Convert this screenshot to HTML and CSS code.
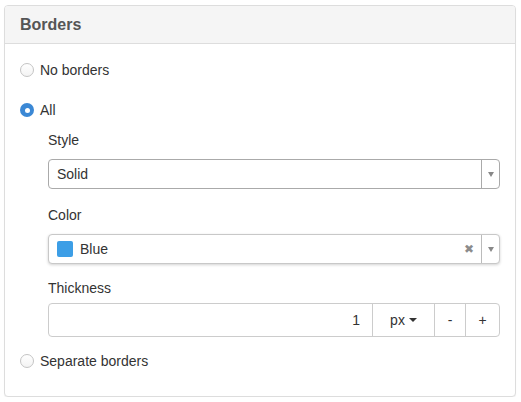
FILE: index.html
```html
<!DOCTYPE html>
<html>
<head>
<meta charset="utf-8">
<link rel="stylesheet" href="styles.css">
</head>
<body>
<div class="panel">
  <div class="panel-heading">Borders</div>
  <div class="panel-body">
    <label class="radio"><span class="radio-dot"></span>No borders</label>
    <label class="radio radio-all"><span class="radio-dot checked"></span>All</label>
    <div class="group">
      <div class="field-label">Style</div>
      <div class="select">
        <span class="select-value">Solid</span>
        <span class="select-arrow"><span class="caret-grey"></span></span>
      </div>
      <div class="field-label">Color</div>
      <div class="select select-focus">
        <span class="select-value"><span class="swatch"></span>Blue</span>
        <span class="select-clear">&#x2716;</span>
        <span class="select-arrow"><span class="caret-grey"></span></span>
      </div>
      <div class="field-label field-label-tight">Thickness</div>
      <div class="input-group">
        <div class="ig-input">1</div>
        <div class="ig-btn ig-unit">px<span class="caret"></span></div>
        <div class="ig-btn ig-small">-</div>
        <div class="ig-btn ig-small ig-last">+</div>
      </div>
    </div>
    <label class="radio radio-sep"><span class="radio-dot"></span>Separate borders</label>
  </div>
</div>
</body>
</html>
```
FILE: styles.css
```css
html, body {
  margin: 0;
  padding: 0;
  background: #fff;
}
body {
  font-family: "Liberation Sans", Arial, sans-serif;
  font-size: 14px;
  color: #333;
  padding: 5px 0 0 4px;
}
.panel {
  width: 510px;
  border: 1px solid #ddd;
  border-radius: 4px;
  box-shadow: 0 1px 1px rgba(0,0,0,0.05);
  background: #fff;
}
.panel-heading {
  background: #f5f5f5;
  border-bottom: 1px solid #ddd;
  border-radius: 3px 3px 0 0;
  padding: 0 15px;
  height: 37px;
  line-height: 37px;
  font-size: 16px;
  font-weight: bold;
  color: #555;
}
.panel-body {
  padding: 16px 15px 25px 15px;
}
.radio {
  display: flex;
  align-items: center;
  height: 20px;
  line-height: 20px;
}
.radio-all {
  margin-top: 20px;
}
.radio-sep {
  margin-top: 14px;
}
.radio-dot {
  box-sizing: border-box;
  width: 14px;
  height: 14px;
  border-radius: 50%;
  border: 1px solid #c4c4c4;
  background: linear-gradient(#fff, #f3f3f3);
  margin-right: 6px;
  position: relative;
}
.radio-dot.checked {
  border: none;
  background: #3b88d5;
}
.radio-dot.checked::after {
  content: "";
  position: absolute;
  left: 4.5px;
  top: 4.5px;
  width: 5px;
  height: 5px;
  border-radius: 50%;
  background: #fff;
}
.group {
  padding-left: 28px;
  padding-top: 10px;
}
.field-label {
  height: 20px;
  line-height: 20px;
  margin-bottom: 9px;
}
.field-label-tight {
  margin-bottom: 5px;
}
.select {
  box-sizing: border-box;
  height: 30px;
  border: 1px solid #aaa;
  border-radius: 4px;
  display: flex;
  align-items: center;
  margin-bottom: 16px;
  background: #fff;
}
.select-focus {
  border-color: #c8c8c8;
  box-shadow: 0 1px 3px rgba(0,0,0,0.18);
  margin-bottom: 14px;
}
.select-value {
  flex: 1;
  padding-left: 8px;
  display: flex;
  align-items: center;
}
.swatch {
  width: 16px;
  height: 16px;
  background: #3c9ee6;
  border-radius: 2px;
  margin-right: 7px;
}
.select-clear {
  font-size: 12px;
  color: #8c8c8c;
  margin-right: 7px;
}
.select-arrow {
  width: 17px;
  align-self: stretch;
  border-left: 1px solid #aaa;
  display: flex;
  align-items: center;
  justify-content: center;
}
.select-focus .select-arrow {
  border-left-color: #bbb;
}
.caret-grey {
  width: 0;
  height: 0;
  border-left: 3.5px solid transparent;
  border-right: 3.5px solid transparent;
  border-top: 5px solid #888;
}
.input-group {
  box-sizing: border-box;
  height: 34px;
  display: flex;
  border: 1px solid #ccc;
  border-radius: 4px;
}
.ig-input {
  flex: 1;
  text-align: right;
  padding-right: 12px;
  line-height: 32px;
}
.ig-btn {
  border-left: 1px solid #ccc;
  display: flex;
  align-items: center;
  justify-content: center;
  line-height: 32px;
}
.ig-unit {
  width: 61px;
}
.ig-small {
  width: 30px;
}
.ig-last {
  width: 33px;
}
.caret {
  display: inline-block;
  width: 0;
  height: 0;
  margin-left: 4px;
  border-left: 4px solid transparent;
  border-right: 4px solid transparent;
  border-top: 4px solid #333;
}
```
